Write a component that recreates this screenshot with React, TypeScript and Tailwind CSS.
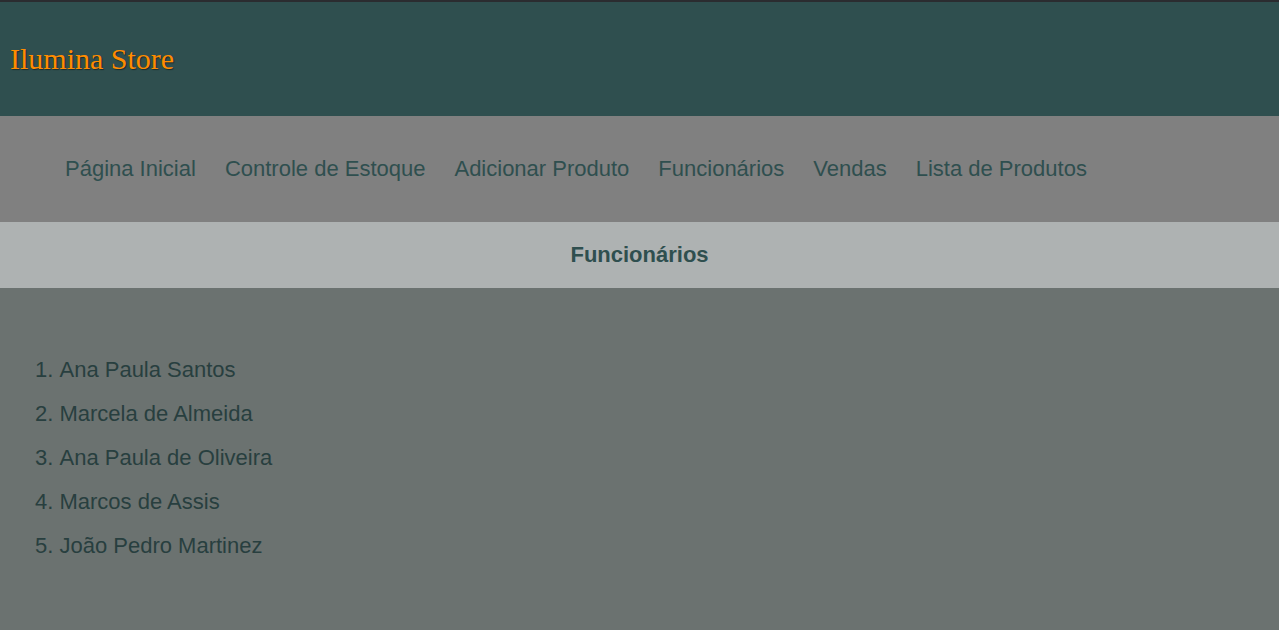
const links = [
  "Página Inicial",
  "Controle de Estoque",
  "Adicionar Produto",
  "Funcionários",
  "Vendas",
  "Lista de Produtos",
];

const funcionarios = [
  "Ana Paula Santos",
  "Marcela de Almeida",
  "Ana Paula de Oliveira",
  "Marcos de Assis",
  "João Pedro Martinez",
];

export default function App() {
  return (
    <div className="min-h-[630px] flex flex-col bg-[#6b7270] font-['Liberation_Sans',Arial,sans-serif] border-t-2 border-[#2b2c30]">
      <header className="h-[114px] bg-[#2f4f4f] flex items-center px-[10px] pb-[2px]">
        <h1 className="font-['Liberation_Serif','Times_New_Roman',serif] text-[30px] text-[#ff8c00] [text-shadow:1px_1px_1px_rgba(0,0,0,0.45)]">
          Ilumina Store
        </h1>
      </header>

      <nav className="h-[106px] bg-[#808080] flex items-center pl-[65px] pb-[2px] gap-[29px]">
        {links.map((l) => (
          <a key={l} href="#" className="text-[22px] text-[#2f4f4f]">
            {l}
          </a>
        ))}
      </nav>

      <div className="h-[66px] bg-[#aeb2b2] flex items-center justify-center pb-[2px]">
        <h2 className="text-[22px] font-bold text-[#2f4f4f]">Funcionários</h2>
      </div>

      <main className="flex-1 pt-[60px] pl-[35px]">
        <ol className="list-decimal list-inside">
          {funcionarios.map((f) => (
            <li key={f} className="h-[44px] leading-[44px] text-[22px] text-[#283f3f]">
              {f}
            </li>
          ))}
        </ol>
      </main>
    </div>
  );
}
